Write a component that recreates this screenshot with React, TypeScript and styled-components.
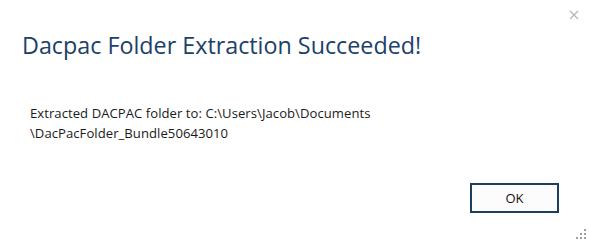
import React from "react";
import styled, { createGlobalStyle } from "styled-components";

const Global = createGlobalStyle`
  html, body { margin: 0; padding: 0; background: #ffffff; }
  * { box-sizing: border-box; }
`;

const FONT = `"Segoe UI", "Open Sans", "Noto Sans", sans-serif`;

const Dialog = styled.div`
  position: relative;
  width: 589px;
  height: 244px;
  background: #ffffff;
  display: flex;
  flex-direction: column;
  font-family: ${FONT};
  overflow: hidden;
`;

const TopBar = styled.div`
  height: 30px;
  display: flex;
  justify-content: flex-end;
  align-items: center;
`;

const CloseButton = styled.button`
  width: 30px;
  height: 30px;
  border: none;
  background: transparent;
  padding: 0;
  display: flex;
  align-items: center;
  justify-content: center;
  cursor: pointer;
`;

const Title = styled.h1`
  margin: 0;
  padding-left: 22px;
  font-family: ${FONT};
  font-weight: 400;
  font-size: 23.3px;
  line-height: 30px;
  color: #1c4168;
  white-space: nowrap;
`;

const Message = styled.div`
  margin-top: 43px;
  padding-left: 30px;
  font-size: 13.1px;
  letter-spacing: 0.05px;
  line-height: 20px;
  color: #1a1a1a;
`;

const Footer = styled.div`
  margin-top: auto;
  display: flex;
  justify-content: flex-end;
  padding: 0 30px 31px 0;
`;

const Button = styled.button`
  width: 89px;
  height: 30px;
  border: 2px solid #1d3f5e;
  background: #fcfcfc;
  font-family: ${FONT};
  font-size: 13px;
  color: #111111;
  padding: 0;
  cursor: pointer;
`;

const Grip = styled.svg`
  position: absolute;
  right: 3px;
  bottom: 5px;
`;

export default function App() {
  return (
    <>
      <Global />
      <Dialog>
        <TopBar>
          <CloseButton aria-label="Close">
            <svg width="10" height="10" viewBox="0 0 10 10">
              <path d="M1 1 L9 9 M9 1 L1 9" stroke="#b4b4b4" strokeWidth="1.1" />
            </svg>
          </CloseButton>
        </TopBar>
        <Title>Dacpac Folder Extraction Succeeded!</Title>
        <Message>
          Extracted DACPAC folder to: C:\Users\Jacob\Documents
          <br />
          \DacPacFolder_Bundle50643010
        </Message>
        <Footer>
          <Button>OK</Button>
        </Footer>
        <Grip width="10" height="10" viewBox="0 0 10 10">
          <rect x="8" y="0" width="2" height="2" fill="#a0a0a0" />
          <rect x="4" y="4" width="2" height="2" fill="#a0a0a0" />
          <rect x="8" y="4" width="2" height="2" fill="#a0a0a0" />
          <rect x="0" y="8" width="2" height="2" fill="#a0a0a0" />
          <rect x="4" y="8" width="2" height="2" fill="#a0a0a0" />
          <rect x="8" y="8" width="2" height="2" fill="#a0a0a0" />
        </Grip>
      </Dialog>
    </>
  );
}
